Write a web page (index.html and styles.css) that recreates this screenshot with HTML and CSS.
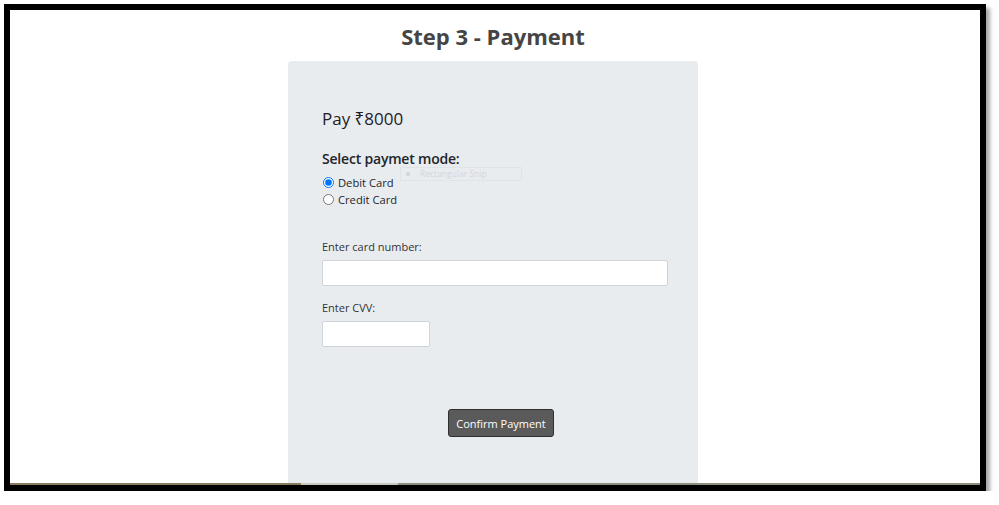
FILE: index.html
```html
<!DOCTYPE html>
<html lang="en">
<head>
<meta charset="utf-8">
<title>Step 3 - Payment</title>
<link rel="stylesheet" href="styles.css">
</head>
<body>
<div class="frame">
  <h1 class="title">Step 3 - Payment</h1>
  <div class="card">
    <h2 class="amount">Pay ₹8000</h2>
    <h3 class="mode-title">Select paymet mode:</h3>
    <label class="radio-row"><input type="radio" name="mode" checked> Debit Card</label>
    <label class="radio-row"><input type="radio" name="mode"> Credit Card</label>
    <div class="field field-first">
      <label class="field-label" for="card">Enter card number:</label>
      <input class="text-input wide" id="card" type="text">
    </div>
    <div class="field">
      <label class="field-label" for="cvv">Enter CVV:</label>
      <input class="text-input narrow" id="cvv" type="text">
    </div>
    <button class="confirm" type="button">Confirm Payment</button>
    <div class="snip"><span class="snip-dot"></span><span class="snip-text">Rectangular Snip</span></div>
  </div>
  <div class="strip"></div>
</div>
</body>
</html>
```

FILE: styles.css
```css
html, body {
  margin: 0;
  background: #ffffff;
}

body {
  font-family: "Open Sans", "Noto Sans", "Liberation Sans", sans-serif;
  color: #212529;
}

.frame {
  margin: 4px 0 0 4px;
  width: 966px;
  padding-right: 4px;
  height: 475px;
  border: 6px solid #000;
  box-shadow: 4px 4px 4px rgba(0, 0, 0, 0.35);
  display: flex;
  flex-direction: column;
  align-items: center;
  overflow: hidden;
  background: #fff;
}

.title {
  margin: 12px 0 10px;
  font-size: 22px;
  line-height: 29px;
  font-weight: 700;
  color: #454545;
}

.card {
  position: relative;
  flex: 1;
  width: 410px;
  box-sizing: border-box;
  padding: 46px 31px 0 34px;
  background: #e9ecef;
  border-radius: 4px 4px 0 0;
  display: flex;
  flex-direction: column;
  align-items: flex-start;
}

.amount {
  margin: 0;
  font-size: 17px;
  line-height: 24px;
  font-weight: 400;
  color: #1e2124;
}

.mode-title {
  margin: 19px 0 6px;
  font-size: 14px;
  line-height: 18px;
  font-weight: 600;
  letter-spacing: -0.2px;
}

.radio-row {
  display: flex;
  align-items: center;
  height: 17px;
  font-size: 11.2px;
  color: #212529;
}

.radio-row input {
  width: 11px;
  height: 11px;
  margin: 0 4px 0 1px;
}

.field {
  display: flex;
  flex-direction: column;
  align-self: stretch;
  margin-top: 13px;
}

.field-first {
  margin-top: 30px;
}

.field-label {
  font-size: 11px;
  line-height: 17px;
  color: #333;
  margin-bottom: 5px;
}

.text-input {
  height: 26px;
  box-sizing: border-box;
  border: 1px solid #ced4da;
  border-radius: 2px;
  background: #fff;
  padding: 0 6px;
}

.wide {
  width: 346px;
}

.narrow {
  width: 108px;
}

.confirm {
  margin: 62px 0 0 126px;
  height: 28px;
  width: 106px;
  padding: 0;
  background: #5a5a5a;
  color: #fff;
  border: 1px solid #2f2f2f;
  border-radius: 3px;
  font-family: inherit;
  font-size: 11px;
}

.snip {
  position: absolute;
  left: 112px;
  top: 106px;
  width: 122px;
  height: 14px;
  box-sizing: border-box;
  border: 1px solid #e0e4e8;
  display: flex;
  align-items: center;
  gap: 10px;
  padding-left: 5px;
}

.snip-dot {
  width: 4px;
  height: 4px;
  border-radius: 50%;
  background: #d0d4d8;
}

.snip-text {
  font-size: 8.5px;
  line-height: 10px;
  color: #d2d6da;
}

.strip {
  align-self: stretch;
  height: 2px;
  margin-right: -4px;
  background: linear-gradient(90deg, #8a7a60 0 30%, #c8c8c0 30% 40%, #8a9080 40% 100%);
}
```
